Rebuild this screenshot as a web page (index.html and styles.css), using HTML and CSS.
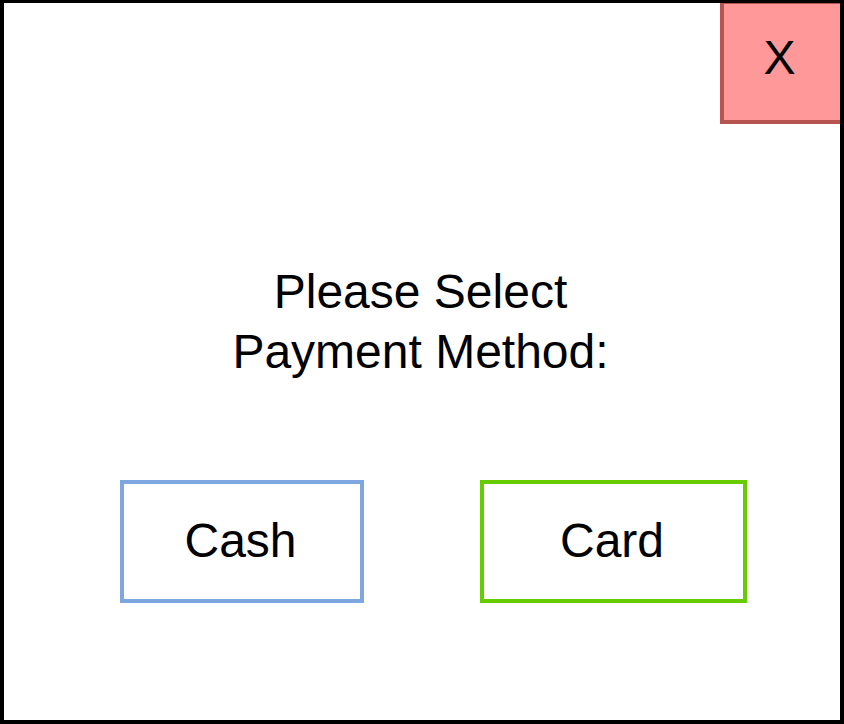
FILE: index.html
```html
<!DOCTYPE html>
<html lang="en">
<head>
<meta charset="utf-8">
<title>Payment</title>
<link rel="stylesheet" href="styles.css">
</head>
<body>
<div class="frame">
  <div class="close">X</div>
  <div class="title">Please Select<br>Payment Method:</div>
  <div class="options">
    <div class="option option-cash">Cash</div>
    <div class="option option-card">Card</div>
  </div>
</div>
</body>
</html>
```

FILE: styles.css
```css
html, body {
  margin: 0;
  padding: 0;
  background: #ffffff;
}

.frame {
  position: relative;
  box-sizing: border-box;
  width: 844px;
  height: 724px;
  border: 4px solid #000000;
  border-top-width: 3px;
  background: #ffffff;
  font-family: "Liberation Sans", Arial, sans-serif;
  color: #000000;
  overflow: hidden;
}

.close {
  position: absolute;
  top: -3px;
  right: -4px;
  box-sizing: border-box;
  width: 124px;
  height: 124px;
  background: #ff9999;
  border: 4px solid #b85450;
  display: flex;
  align-items: center;
  justify-content: center;
  padding: 0 5px 8px 0;
  font-size: 48px;
  line-height: 1;
}

.title {
  margin-top: 259px;
  text-align: center;
  font-size: 48px;
  line-height: 60px;
  padding-right: 3px;
}

.options {
  display: flex;
  margin-top: 98px;
  padding-left: 116px;
  gap: 116px;
}

.option {
  box-sizing: border-box;
  height: 123px;
  display: flex;
  align-items: center;
  justify-content: center;
  font-size: 48px;
  border: 4px solid;
  padding-bottom: 3px;
}

.option-cash {
  width: 244px;
  border-color: #7ea6e0;
  padding-right: 3px;
}

.option-card {
  width: 267px;
  border-color: #66cc00;
  padding-right: 3px;
}
```
